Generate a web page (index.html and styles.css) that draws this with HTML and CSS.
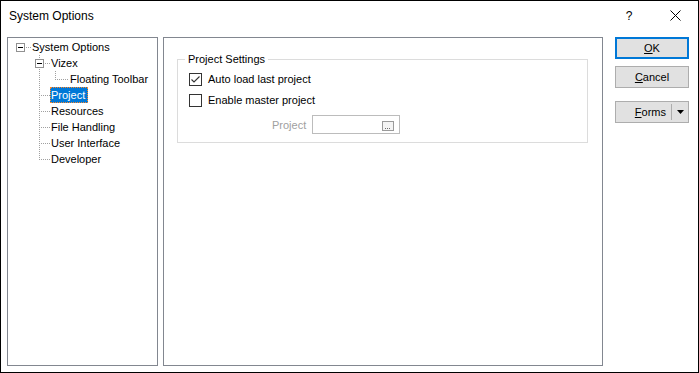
FILE: index.html
```html
<!DOCTYPE html>
<html>
<head>
<meta charset="utf-8">
<title>System Options</title>
<link rel="stylesheet" href="styles.css">
</head>
<body>
<div class="window">
  <div class="titlebar">
    <div class="title">System Options</div>
    <div class="tb-btn tb-help">?</div>
    <div class="tb-btn tb-close">
      <svg width="11" height="11" viewBox="0 0 11 11"><path d="M0.5 0.5L10.5 10.5M10.5 0.5L0.5 10.5" stroke="#000" stroke-width="1" fill="none"/></svg>
    </div>
  </div>
  <div class="content">
    <div class="tree">
      <div class="node">
        <span class="g g0"><span class="exp"><span class="minus"></span></span></span>
        <span class="lbl">System Options</span>
      </div>
      <div class="node">
        <span class="g g1 g1exp"><span class="exp exp1"><span class="minus"></span></span></span>
        <span class="lbl">Vizex</span>
      </div>
      <div class="node">
        <span class="g g2"></span>
        <span class="lbl">Floating Toolbar</span>
      </div>
      <div class="node">
        <span class="g g1 g1mid"></span>
        <span class="lbl selected">Project</span>
      </div>
      <div class="node">
        <span class="g g1 g1mid"></span>
        <span class="lbl">Resources</span>
      </div>
      <div class="node">
        <span class="g g1 g1mid"></span>
        <span class="lbl">File Handling</span>
      </div>
      <div class="node">
        <span class="g g1 g1mid"></span>
        <span class="lbl">User Interface</span>
      </div>
      <div class="node">
        <span class="g g1 g1last"></span>
        <span class="lbl">Developer</span>
      </div>
    </div>
    <div class="page">
      <fieldset class="group">
        <legend>Project Settings</legend>
        <div class="check-row">
          <span class="cb">
            <svg width="11" height="11" viewBox="0 0 11 11"><path d="M1.5 5.5L4 8L9.5 2.5" stroke="#333" stroke-width="1.1" fill="none"/></svg>
          </span>
          <span class="cb-text">Auto load last project</span>
        </div>
        <div class="check-row row2">
          <span class="cb"></span>
          <span class="cb-text">Enable master project</span>
        </div>
        <div class="field-row">
          <span class="field-label">Project</span>
          <div class="input">
            <span class="browse">
              <svg width="12" height="10" viewBox="0 0 12 10"><rect x="0.5" y="0.5" width="11" height="9" fill="#f4f4f4" stroke="#9a9a9a"/><rect x="3" y="7" width="1" height="1" fill="#6d6d6d"/><rect x="5" y="7" width="1" height="1" fill="#6d6d6d"/><rect x="7" y="7" width="1" height="1" fill="#6d6d6d"/></svg>
            </span>
          </div>
        </div>
      </fieldset>
    </div>
    <div class="buttons">
      <div class="btn btn-default"><span><u>O</u>K</span></div>
      <div class="btn btn-cancel"><span><u>C</u>ancel</span></div>
      <div class="btn btn-split">
        <span class="split-label"><u>F</u>orms</span>
        <span class="split-sep"></span>
        <span class="split-arrow">
          <svg width="7" height="4" viewBox="0 0 7 4"><path d="M0 0H7L3.5 4Z" fill="#000"/></svg>
        </span>
      </div>
    </div>
  </div>
</div>
</body>
</html>
```
FILE: styles.css
```css
html, body {
  margin: 0;
  padding: 0;
  background: #fff;
}

.window {
  box-sizing: border-box;
  width: 699px;
  height: 373px;
  border: 1px solid #000;
  background: #fff;
  display: flex;
  flex-direction: column;
  font-family: "Liberation Sans", Arial, sans-serif;
  font-size: 11px;
  color: #000;
}

/* Title bar */
.titlebar {
  height: 36px;
  flex: none;
  display: flex;
  align-items: flex-start;
}

.title {
  flex: 1;
  padding-left: 8px;
  padding-top: 7px;
  font-size: 12px;
  line-height: 16px;
}

.tb-btn {
  width: 46px;
  display: flex;
  justify-content: center;
}

.tb-help {
  padding-top: 7px;
  font-size: 12px;
  line-height: 16px;
}

.tb-close {
  padding-top: 9px;
}

/* Content */
.content {
  flex: 1;
  display: flex;
  padding: 0 9px 6px 6px;
}

.tree {
  box-sizing: border-box;
  width: 151px;
  flex: none;
  border: 1px solid #828790;
  padding-top: 1px;
}

.node {
  display: flex;
  align-items: center;
  height: 16px;
}

.g {
  flex: none;
  height: 16px;
  display: flex;
  align-items: center;
  background-repeat: no-repeat;
}

.g0 {
  width: 23px;
  background-image: repeating-linear-gradient(90deg, #a0a0a0 0 1px, transparent 1px 2px);
  background-position: 18px 8px;
  background-size: 5px 1px;
}

.g1 {
  width: 42px;
}

.g1exp {
  background-image:
    repeating-linear-gradient(180deg, #a0a0a0 0 1px, transparent 1px 2px),
    repeating-linear-gradient(180deg, #a0a0a0 0 1px, transparent 1px 2px),
    repeating-linear-gradient(90deg, #a0a0a0 0 1px, transparent 1px 2px);
  background-position: 31px 0, 31px 14px, 37px 8px;
  background-size: 1px 4px, 1px 2px, 5px 1px;
}

.g1mid {
  background-image:
    repeating-linear-gradient(180deg, #a0a0a0 0 1px, transparent 1px 2px),
    repeating-linear-gradient(90deg, #a0a0a0 0 1px, transparent 1px 2px);
  background-position: 31px 0, 33px 8px;
  background-size: 1px 16px, 9px 1px;
}

.g1last {
  background-image:
    repeating-linear-gradient(180deg, #a0a0a0 0 1px, transparent 1px 2px),
    repeating-linear-gradient(90deg, #a0a0a0 0 1px, transparent 1px 2px);
  background-position: 31px 0, 33px 8px;
  background-size: 1px 9px, 9px 1px;
}

.g2 {
  width: 61px;
  background-image:
    repeating-linear-gradient(180deg, #a0a0a0 0 1px, transparent 1px 2px),
    repeating-linear-gradient(180deg, #a0a0a0 0 1px, transparent 1px 2px),
    repeating-linear-gradient(90deg, #a0a0a0 0 1px, transparent 1px 2px);
  background-position: 31px 0, 47px 0, 49px 8px;
  background-size: 1px 16px, 1px 9px, 12px 1px;
}

.exp {
  box-sizing: border-box;
  width: 9px;
  height: 9px;
  margin-left: 8px;
  border: 1px solid #919191;
  background: #fff;
  display: flex;
  align-items: center;
  justify-content: center;
}

.exp1 {
  margin-left: 27px;
}

.minus {
  width: 5px;
  height: 1px;
  background: #000;
}

.lbl {
  box-sizing: border-box;
  height: 16px;
  line-height: 14px;
  padding: 0 2px 0 0;
  border: 1px solid transparent;
  white-space: nowrap;
}

.lbl.selected {
  background: #0078d7;
  color: #fff;
  border: 1px dotted #ff8728;
}

/* Page */
.page {
  box-sizing: border-box;
  width: 440px;
  flex: none;
  margin-left: 5px;
  border: 1px solid #828790;
}

.group {
  box-sizing: border-box;
  width: 411px;
  margin: 14px 0 0 13px;
  padding: 5px 10px 8px 11px;
  border: 1px solid #dcdcdc;
  min-width: 0;
}

.group legend {
  margin-left: -4px;
  padding: 0 3px;
  line-height: 14px;
  font-size: 11px;
}

.check-row {
  display: flex;
  align-items: center;
  height: 16px;
}

.check-row.row2 {
  margin-top: 5px;
}

.cb {
  box-sizing: border-box;
  width: 13px;
  height: 13px;
  flex: none;
  border: 1px solid #333;
  background: #fff;
  display: flex;
  align-items: center;
  justify-content: center;
}

.cb-text {
  margin-left: 6px;
  line-height: 14px;
}

.field-row {
  display: flex;
  align-items: center;
  margin-top: 7px;
  height: 19px;
}

.field-label {
  margin-left: 83px;
  width: 40px;
  color: #a0a0a0;
  line-height: 14px;
}

.input {
  box-sizing: border-box;
  width: 88px;
  height: 19px;
  border: 1px solid #bcbcbc;
  background: #fff;
  display: flex;
  align-items: center;
  justify-content: flex-end;
  padding-right: 5px;
  padding-top: 2px;
}

.browse {
  display: flex;
}

/* Buttons */
.buttons {
  width: 74px;
  flex: none;
  margin-left: 12px;
  display: flex;
  flex-direction: column;
}

.btn {
  box-sizing: border-box;
  height: 22px;
  border: 1px solid #adadad;
  background: #e1e1e1;
  display: flex;
  align-items: center;
  justify-content: center;
  line-height: 14px;
}

.btn-default {
  border: 1px solid #0078d7;
  box-shadow: inset 0 0 0 1px #0078d7;
}

.btn-cancel {
  margin-top: 7px;
}

.btn-split {
  margin-top: 13px;
  justify-content: flex-end;
}

.split-label {
  margin-right: 5px;
}

.split-sep {
  width: 1px;
  height: 16px;
  background: #adadad;
}

.split-arrow {
  width: 16px;
  display: flex;
  justify-content: center;
  align-items: center;
}
```
